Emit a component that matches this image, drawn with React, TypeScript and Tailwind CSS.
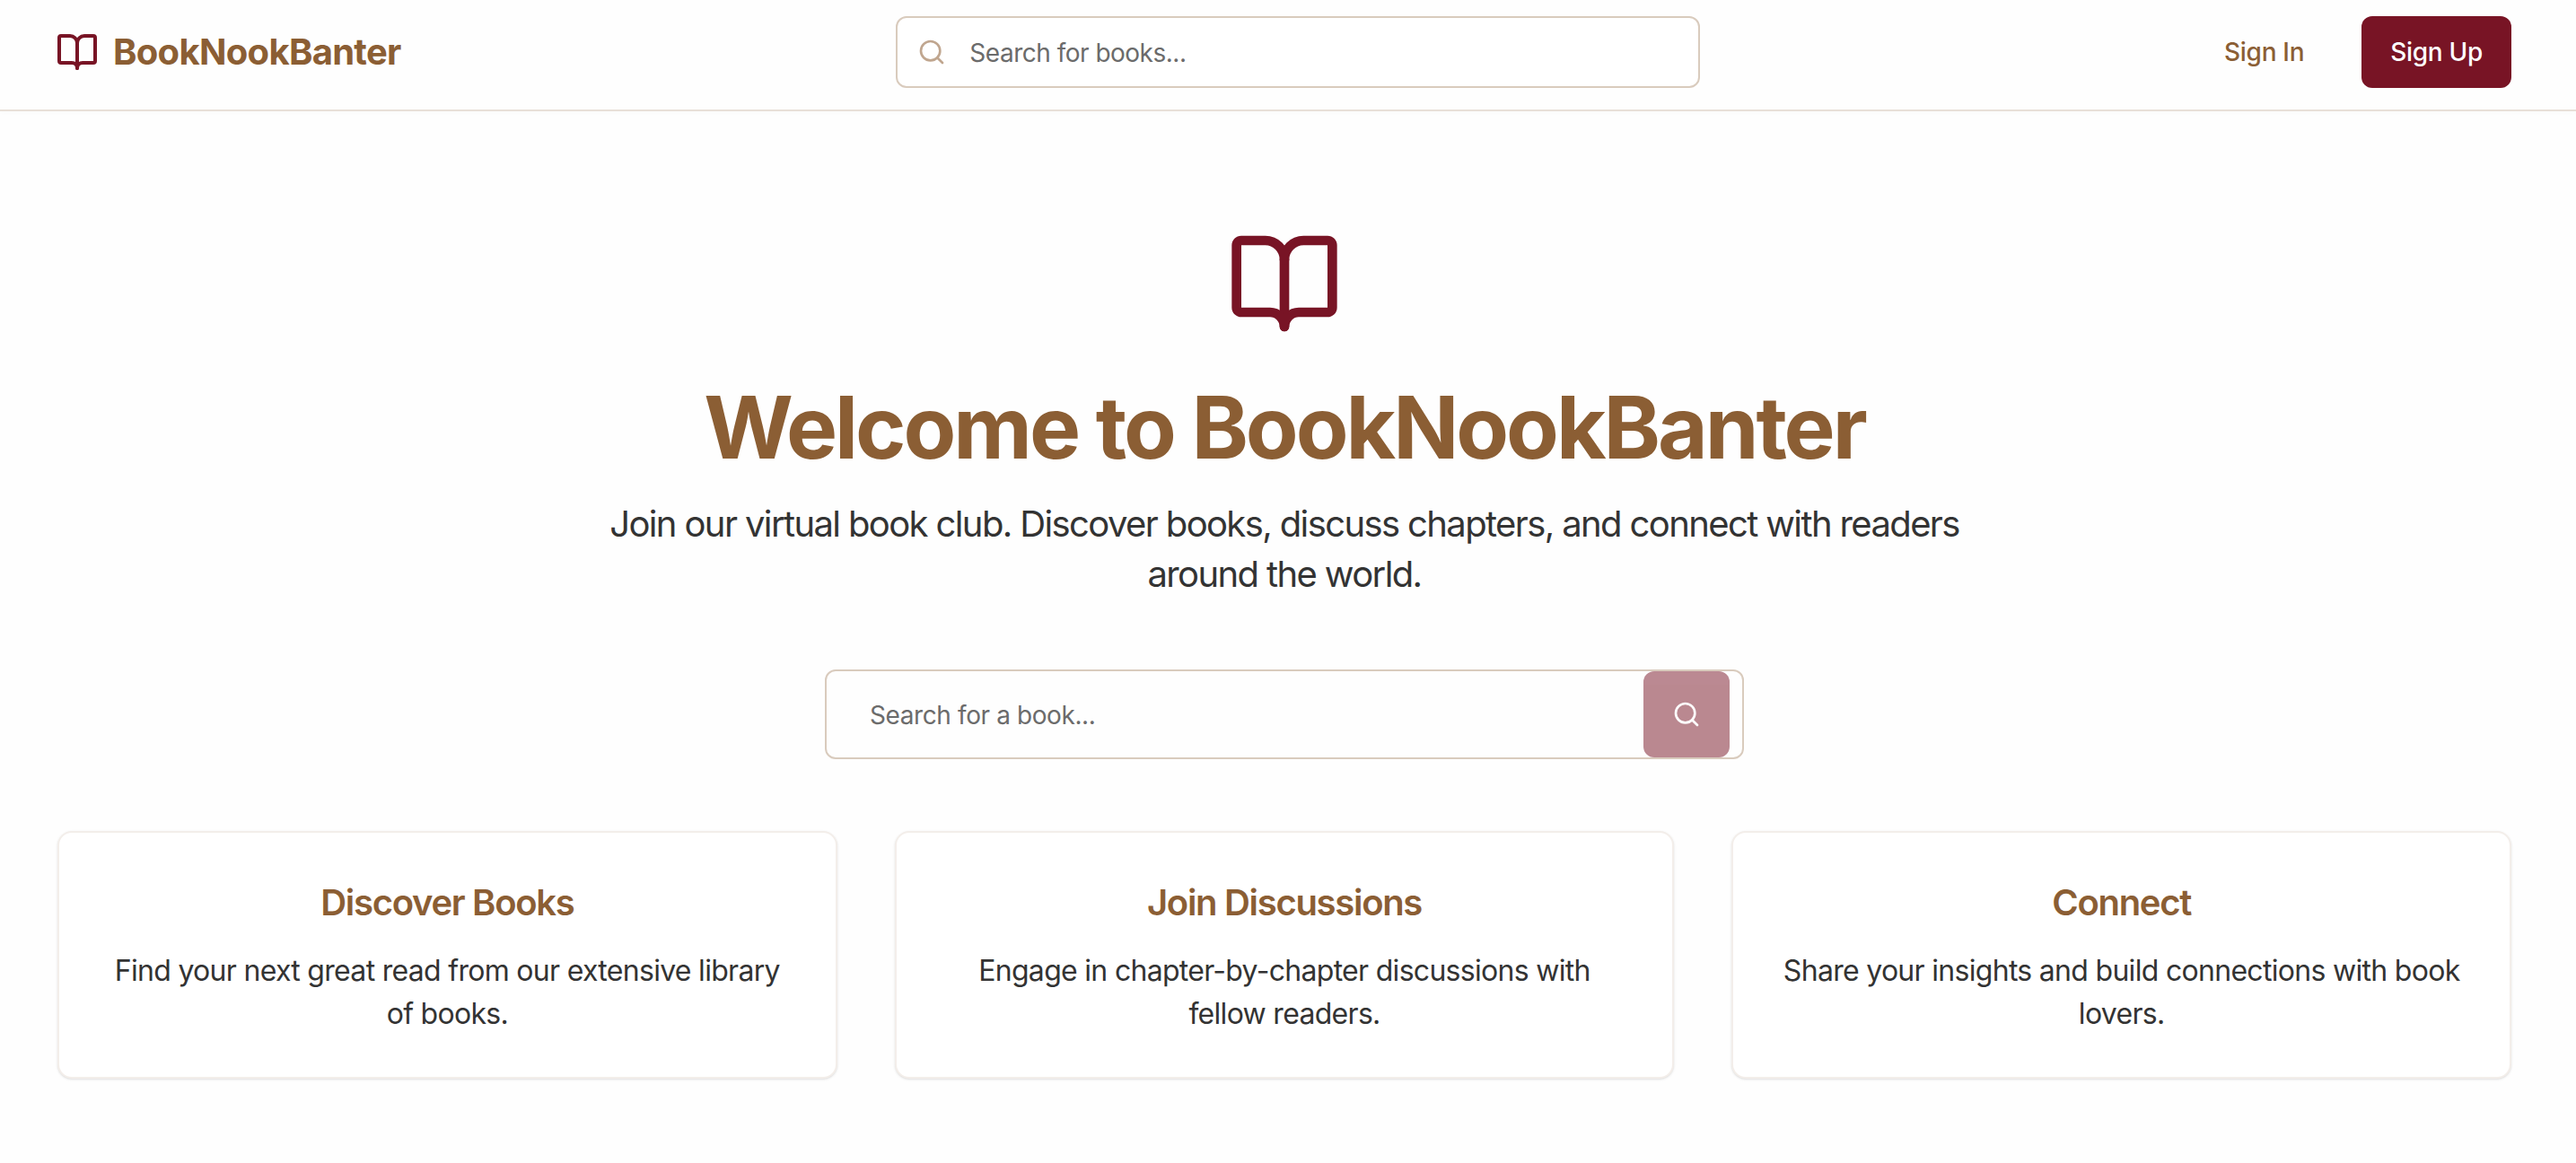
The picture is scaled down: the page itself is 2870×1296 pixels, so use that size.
import { BookOpen, Search } from "lucide-react"

const features = [
  { title: "Discover Books", text: "Find your next great read from our extensive library of books." },
  { title: "Join Discussions", text: "Engage in chapter-by-chapter discussions with fellow readers." },
  { title: "Connect", text: "Share your insights and build connections with book lovers." },
]

export default function App() {
  return (
    <div className="min-h-[1296px] bg-[#fefefe] font-['Inter',sans-serif] text-[#333333]">
      {/* Header */}
      <header className="flex h-[124px] items-start justify-between border-b-2 border-[#e8e0d8] pt-[18px] pr-[72px] pl-16 shadow-[0_2px_4px_rgba(0,0,0,0.02)]">
        <div className="-ml-[2px] flex h-20 items-center gap-4">
          <BookOpen className="h-12 w-12 text-[#781425]" />
          <span className="text-[40px] font-bold tracking-[-0.7px] text-[#8b5e34]">BookNookBanter</span>
        </div>
        <div className="relative w-[896px]">
          <Search className="absolute top-6 left-6 h-8 w-8 text-[#c0a68f]" />
          <input
            placeholder="Search for books..."
            className="h-20 w-full rounded-xl border-2 border-[#d9cbbd] bg-white pt-[2px] pr-6 pl-20 text-[28px] tracking-[-0.5px] outline-none placeholder:text-[#6b6b6b]"
          />
        </div>
        <div className="flex items-center gap-8">
          <button className="flex h-20 items-center px-8 text-[28px] font-medium tracking-[-0.3px] text-[#8b5e34]">Sign In</button>
          <button className="flex h-20 items-center justify-center rounded-xl bg-[#781425] px-8 text-[28px] font-medium tracking-[-0.3px] text-white">
            Sign Up
          </button>
        </div>
      </header>

      {/* Hero */}
      <main className="flex flex-col items-center pt-[128px] pr-[72px] pl-16">
        <BookOpen className="h-32 w-32 text-[#781425]" />
        <h1 className="mt-12 text-[96px] leading-[96px] font-bold tracking-[-3.05px] text-[#8b5e34]">Welcome to BookNookBanter</h1>
        <p className="mt-8 w-[1536px] text-center text-[40px] leading-[56px] tracking-[-1.62px]">
          Join our virtual book club. Discover books, discuss chapters, and connect with readers around the world.
        </p>

        <form className="mt-[78px] flex h-[100px] w-[1024px] items-center rounded-xl border-2 border-[#d9cbbd] pr-[14px]">
          <input
            placeholder="Search for a book..."
            className="h-full flex-1 bg-transparent px-12 pt-[2px] text-[28px] tracking-[-0.4px] outline-none placeholder:text-[#6b6b6b]"
          />
          <button type="button" className="flex h-full w-24 items-center justify-center rounded-xl bg-[#781425] opacity-50">
            <Search className="h-8 w-8 text-white" />
          </button>
        </form>

        {/* Features */}
        <div className="mt-[80px] grid w-full grid-cols-3 gap-16">
          {features.map((feature) => (
            <div key={feature.title} className="h-[276px] rounded-2xl border-2 border-[#f3eeea] bg-white px-[52px] pt-[50px] text-center shadow-sm">
              <h3 className="text-[40px] leading-[56px] font-semibold tracking-[-1.3px] text-[#8b5e34]">{feature.title}</h3>
              <p className="mt-6 text-[32px] leading-[48px] tracking-[-0.7px]">{feature.text}</p>
            </div>
          ))}
        </div>
      </main>
    </div>
  )
}
